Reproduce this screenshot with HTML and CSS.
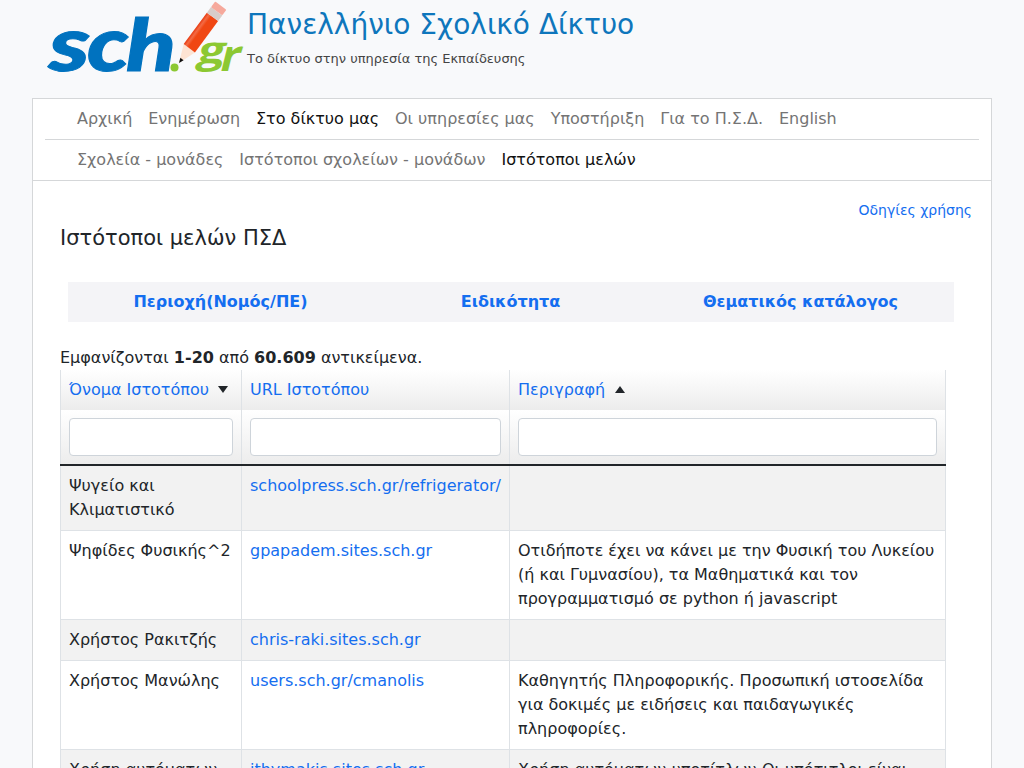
FILE: index.html
```html
<!DOCTYPE html>
<html lang="el">
<head>
    <meta charset="UTF-8">
    <meta name="viewport" content="width=device-width, initial-scale=1.0">
    <title>Ιστότοποι μελών ΠΣΔ</title>
    <link rel="stylesheet" href="styles.css">
</head>

<body>

    <header class="site-header">
        <a href="#" class="logo">
            <svg width="200" height="90" viewBox="45 0 200 90">
                <defs>
                    <linearGradient id="pencilBody" x1="0" y1="0" x2="1" y2="0">
                        <stop offset="0" stop-color="#e8380d"/>
                        <stop offset="0.2" stop-color="#f36b45"/>
                        <stop offset="0.4" stop-color="#f04713"/>
                        <stop offset="1" stop-color="#f04713"/>
                    </linearGradient>
                </defs>
                <g class="logo-sch">
                    <text x="49" y="71" textLength="41" lengthAdjust="spacingAndGlyphs">s</text>
                    <text x="87" y="71" textLength="42" lengthAdjust="spacingAndGlyphs">c</text>
                    <text class="logo-h" x="126" y="71" textLength="50" lengthAdjust="spacingAndGlyphs">h</text>
                </g>
                <circle cx="174.500" cy="67.500" r="4" fill="#8cc832"/>
                <g transform="translate(179 63) rotate(36.500)">
                    <path d="M0 0 L-7.500 -18 L6.500 -18 Z" fill="#fde3d3"/>
                    <path d="M0 0 L-2 -5 L2 -5 Z" fill="#111"/>
                    <rect x="-7.500" y="-57" width="14" height="39" fill="url(#pencilBody)"/>
                    <rect x="-7.500" y="-64" width="14" height="7" fill="#d8cdc9"/>
                    <rect x="-7.500" y="-71" width="14" height="7" rx="1" fill="#f6a99c"/>
                </g>
                <g class="logo-gr" transform="translate(195 71) skewX(-14)">
                    <text class="logo-g" x="-1" y="-8" textLength="27" lengthAdjust="spacingAndGlyphs">g</text>
                    <text class="logo-r" x="23" y="0" textLength="20" lengthAdjust="spacingAndGlyphs">r</text>
                </g>
            </svg>
        </a>
        <div class="site-title">
            <h1>Πανελλήνιο Σχολικό Δίκτυο</h1>
            <p>Το δίκτυο στην υπηρεσία της Εκπαίδευσης</p>
        </div>
    </header>

    <div class="container">
        <nav class="menus">
            <ul class="menu">
                <li><a href="#">Αρχική</a></li>
                <li><a href="#">Ενημέρωση</a></li>
                <li><a href="#" class="active">Στο δίκτυο μας</a></li>
                <li><a href="#">Οι υπηρεσίες μας</a></li>
                <li><a href="#">Υποστήριξη</a></li>
                <li><a href="#">Για το Π.Σ.Δ.</a></li>
                <li><a href="#">English</a></li>
            </ul>
            <ul class="menu">
                <li><a href="#">Σχολεία - μονάδες</a></li>
                <li><a href="#">Ιστότοποι σχολείων - μονάδων</a></li>
                <li><a href="#" class="active">Ιστότοποι μελών</a></li>
            </ul>
        </nav>

        <main class="content">
            <div class="help"><a href="#">Οδηγίες χρήσης</a></div>
            <h2>Ιστότοποι μελών ΠΣΔ</h2>

            <div class="filters">
                <a href="#">Περιοχή(Νομός/ΠΕ)</a>
                <a href="#">Ειδικότητα</a>
                <a href="#">Θεματικός κατάλογος</a>
            </div>

            <div class="summary">Εμφανίζονται <b>1-20</b> από <b>60.609</b> αντικείμενα.</div>

            <table class="sites">
                <colgroup>
                    <col class="col-name">
                    <col class="col-url">
                    <col class="col-desc">
                </colgroup>
                <thead>
                    <tr>
                        <th><a href="#">Όνομα Ιστοτόπου</a><span class="sort sort-down"></span></th>
                        <th><a href="#">URL Ιστοτόπου</a></th>
                        <th><a href="#">Περιγραφή</a><span class="sort sort-up"></span></th>
                    </tr>
                    <tr class="search">
                        <td><input type="text" name="name"></td>
                        <td><input type="text" name="url"></td>
                        <td><input type="text" name="description"></td>
                    </tr>
                </thead>
                <tbody>
                    <tr>
                        <td>Ψυγείο και Κλιματιστικό</td>
                        <td><a href="#">schoolpress.sch.gr/refrigerator/</a></td>
                        <td></td>
                    </tr>
                    <tr>
                        <td>Ψηφίδες Φυσικής^2</td>
                        <td><a href="#">gpapadem.sites.sch.gr</a></td>
                        <td>Οτιδήποτε έχει να κάνει με την Φυσική του Λυκείου (ή και Γυμνασίου), τα Μαθηματικά και τον προγραμματισμό σε python ή javascript</td>
                    </tr>
                    <tr>
                        <td>Χρήστος Ρακιτζής</td>
                        <td><a href="#">chris-raki.sites.sch.gr</a></td>
                        <td></td>
                    </tr>
                    <tr>
                        <td>Χρήστος Μανώλης</td>
                        <td><a href="#">users.sch.gr/cmanolis</a></td>
                        <td>Καθηγητής Πληροφορικής. Προσωπική ιστοσελίδα για δοκιμές με ειδήσεις και παιδαγωγικές πληροφορίες.</td>
                    </tr>
                    <tr>
                        <td>Χρήση αυτόματων</td>
                        <td><a href="#">ithymakis.sites.sch.gr</a></td>
                        <td>Χρήση αυτόματων υποτίτλων Οι υπότιτλοι είναι</td>
                    </tr>
                </tbody>
            </table>
        </main>
    </div>

</body>
</html>
```

FILE: styles.css
```css
* {
    margin: 0;
    padding: 0;
    box-sizing: border-box;
}

body {
    height: 100vh;
    overflow: hidden;
    font-family: "DejaVu Sans", sans-serif;
    font-size: 16px;
    line-height: 24px;
    color: #212529;
    background-color: #f8f9fb;
}

a {
    color: #146ef0;
    text-decoration: none;
}

.site-header {
    display: flex;
    gap: 2px;
    height: 98px;
    padding-left: 45px;
}

.logo svg {
    display: block;
    overflow: visible;
}

.logo-sch {
    font-family: Lato, sans-serif;
    font-style: italic;
    font-weight: 900;
    font-size: 77px;
    fill: #0072bf;
    stroke: #0072bf;
    stroke-width: 1;
}

.logo-h {
    font-size: 73px;
}

.logo-gr {
    font-family: "Open Sans", sans-serif;
    font-weight: 700;
    fill: #8cc832;
}

.logo-g {
    font-size: 37px;
}

.logo-r {
    font-size: 44px;
}

.site-title {
    padding-top: 8px;
}

.site-title h1 {
    font-size: 28px;
    line-height: 34px;
    font-weight: 400;
    color: #0e76bc;
}

.site-title p {
    margin-top: 7px;
    font-size: 13px;
    line-height: 20px;
    color: #444;
}

.container {
    width: 960px;
    min-height: 700px;
    margin: 0 auto;
    background-color: #fff;
    border: 1px solid #d5d7d9;
}

.menus {
    padding: 0 12px;
    border-bottom: 1px solid #d5d7d9;
}

.menu {
    display: flex;
    gap: 15.9px;
    padding: 0 32px;
    list-style-type: none;
}

.menu + .menu {
    border-top: 1px solid #d5d7d9;
}

.menu a {
    display: block;
    padding: 8px 0;
    color: #747474;
}

.menu a.active {
    color: #111;
}

.content {
    padding: 17px 45px 0 27px;
}

.help {
    margin-right: -26px;
    text-align: right;
    font-size: 14px;
}

.content h2 {
    margin-top: 3px;
    font-size: 21px;
    line-height: 26px;
    font-weight: 400;
}

.filters {
    display: grid;
    grid-template-columns: 305px 275px 305px;
    margin: 31px 0 0 8px;
    padding: 8px 0;
    width: 886px;
    background-color: #f4f4f7;
    text-align: center;
    font-weight: bold;
}

.summary {
    margin-top: 24px;
}

.sites {
    width: 886px;
    table-layout: fixed;
    border-collapse: collapse;
}

.col-name {
    width: 181px;
}

.col-url {
    width: 268px;
}

.sites th,
.sites td {
    padding: 8px;
    border: 0 solid #dee2e6;
    border-left-width: 1px;
    border-right-width: 1px;
    text-align: left;
    vertical-align: top;
}

.sites th {
    font-weight: 400;
    white-space: nowrap;
}

.sites thead tr {
    background: linear-gradient(#fff, #ececec);
}

.sites input {
    display: block;
    width: 100%;
    height: 38px;
    padding: 6px 12px;
    background-color: #fff;
    border: 1px solid #ced4da;
    border-radius: 4px;
}

.sites tbody {
    border-top: 2px solid #212529;
}

.sites tbody td {
    border-bottom-width: 1px;
}

.sites tbody tr:nth-child(odd) {
    background-color: #f2f2f2;
}

.sort {
    display: inline-block;
    margin-left: 9.5px;
    border-left: 5px solid transparent;
    border-right: 5px solid transparent;
    vertical-align: 2px;
}

.sort-down {
    border-top: 7px solid #212529;
}

.sort-up {
    border-bottom: 7px solid #212529;
}
```
